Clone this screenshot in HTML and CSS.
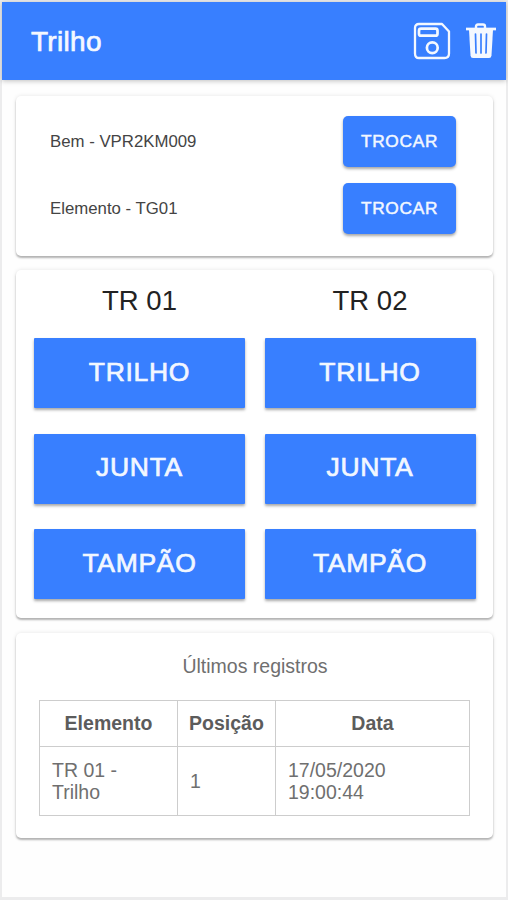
FILE: index.html
```html
<!DOCTYPE html>
<html lang="pt-BR">
<head>
<meta charset="utf-8">
<title>Trilho</title>
<link rel="stylesheet" href="styles.css">
</head>
<body>
<div class="screen">
  <header class="toolbar">
    <h1 class="toolbar-title">Trilho</h1>
    <svg class="icon-save" width="38" height="38" viewBox="0 0 38 38" fill="none" stroke="currentColor" stroke-width="2.3" stroke-linejoin="round">
      <path d="M6 2H29L36 9.500V31.500Q36 36 31.500 36H6Q2 36 2 31.500V6Q2 2 6 2Z"/>
      <rect x="6" y="6.700" width="18.500" height="7" rx="2" stroke-width="2.700"/>
      <circle cx="19.300" cy="25.800" r="5.400" stroke-width="2.700"/>
    </svg>
    <svg class="icon-trash" width="32" height="36" viewBox="0 0 32 36" fill="none" stroke="currentColor">
      <path d="M11 5V3.500Q11 1.500 13 1.500H18Q20 1.500 20 3.500V5" stroke-width="2.400"/>
      <path d="M1 6H31" stroke-width="2.700"/>
      <path d="M4 7H28L26.500 32.500Q26.300 35 24 35H8Q5.700 35 5.500 32.500Z" fill="currentColor" stroke="none"/>
      <path class="slots" d="M10.500 11L11 30M16 11V30M21.500 11L21 30" stroke-width="1.700" stroke-linecap="round"/>
    </svg>
  </header>
  <main class="content">
    <section class="card selection">
      <div class="row"><span>Bem - VPR2KM009</span><button class="btn btn-small">TROCAR</button></div>
      <div class="row"><span>Elemento - TG01</span><button class="btn btn-small">TROCAR</button></div>
    </section>
    <section class="card tracks">
      <div class="track">
        <h2>TR 01</h2>
        <button class="btn btn-large">TRILHO</button>
        <button class="btn btn-large">JUNTA</button>
        <button class="btn btn-large">TAMPÃO</button>
      </div>
      <div class="track">
        <h2>TR 02</h2>
        <button class="btn btn-large">TRILHO</button>
        <button class="btn btn-large">JUNTA</button>
        <button class="btn btn-large">TAMPÃO</button>
      </div>
    </section>
    <section class="card records">
      <p>Últimos registros</p>
      <table>
        <colgroup><col class="col-element"><col class="col-position"><col></colgroup>
        <thead><tr><th>Elemento</th><th>Posição</th><th>Data</th></tr></thead>
        <tbody><tr><td>TR 01 -<br>Trilho</td><td>1</td><td>17/05/2020<br>19:00:44</td></tr></tbody>
      </table>
    </section>
  </main>
</div>
</body>
</html>
```
FILE: styles.css
```css
* { box-sizing: border-box; }
body {
  margin: 0;
  background: #fff;
  font-family: "Liberation Sans", Arial, sans-serif;
}
.screen {
  height: 900px;
  border: 2px solid #ececed;
  border-bottom-width: 3px;
  background: #fefefe;
}
.toolbar {
  height: 78px;
  display: flex;
  align-items: center;
  padding: 0 9px 0 29px;
  background: #387fff;
  color: #f4f8ff;
  box-shadow: 0 1px 5px rgba(0, 0, 0, .25);
}
.toolbar-title {
  flex: 1;
  margin: 0;
  padding-top: 1px;
  font-size: 28px;
  font-weight: 400;
  letter-spacing: .3px;
  -webkit-text-stroke: .7px currentColor;
}
.icon-save { margin-right: 14px; }
.icon-trash .slots { stroke: #387fff; }
.content { padding: 16px 13px 0 14px; }
.card {
  background: #fff;
  border-radius: 5px;
  box-shadow: 0 2px 2px rgba(0, 0, 0, .27), 0 0 4px rgba(0, 0, 0, .1);
}
.selection {
  height: 160px;
  padding: 20px 37px 0 34px;
  display: flex;
  flex-direction: column;
  gap: 16px;
}
.row {
  display: flex;
  justify-content: space-between;
  align-items: center;
  height: 51px;
  font-size: 16.800px;
  color: #444;
}
.btn {
  border: 0;
  padding: 0;
  background: #387fff;
  color: #f2f7ff;
  font-family: inherit;
  -webkit-text-stroke: .7px currentColor;
  box-shadow: 0 2px 3px rgba(0, 0, 0, .35);
}
.btn-small {
  width: 113px;
  height: 51px;
  border-radius: 5px;
  font-size: 17.300px;
  letter-spacing: .7px;
  -webkit-text-stroke-width: .5px;
}
.tracks {
  height: 348px;
  margin-top: 14px;
  padding: 15px 17px 0 18px;
  display: grid;
  grid-template-columns: 211px 211px;
  column-gap: 19.500px;
}
.track h2 {
  height: 32px;
  margin: 0 0 21px;
  text-align: center;
  font-size: 27.500px;
  line-height: 32px;
  font-weight: 400;
  color: #222;
}
.btn-large {
  display: block;
  width: 100%;
  height: 70px;
  margin-bottom: 25.500px;
  padding-bottom: 2px;
  border-radius: 1px;
  font-size: 26.500px;
  letter-spacing: .7px;
}
.records {
  height: 205px;
  margin-top: 15px;
  padding: 22px 22px 0 23px;
  color: #6f6f6f;
  font-size: 19.500px;
  line-height: 22px;
}
.records p { margin: 0 0 23px; text-align: center; }
table {
  width: 431px;
  table-layout: fixed;
  border-collapse: collapse;
}
.col-element { width: 138px; }
.col-position { width: 98px; }
th, td { border: 1px solid #cdcdcd; padding: 0 12px; }
th { height: 46px; padding: 0 0 2px; color: #5c5c5c; }
td { height: 69px; }
```
